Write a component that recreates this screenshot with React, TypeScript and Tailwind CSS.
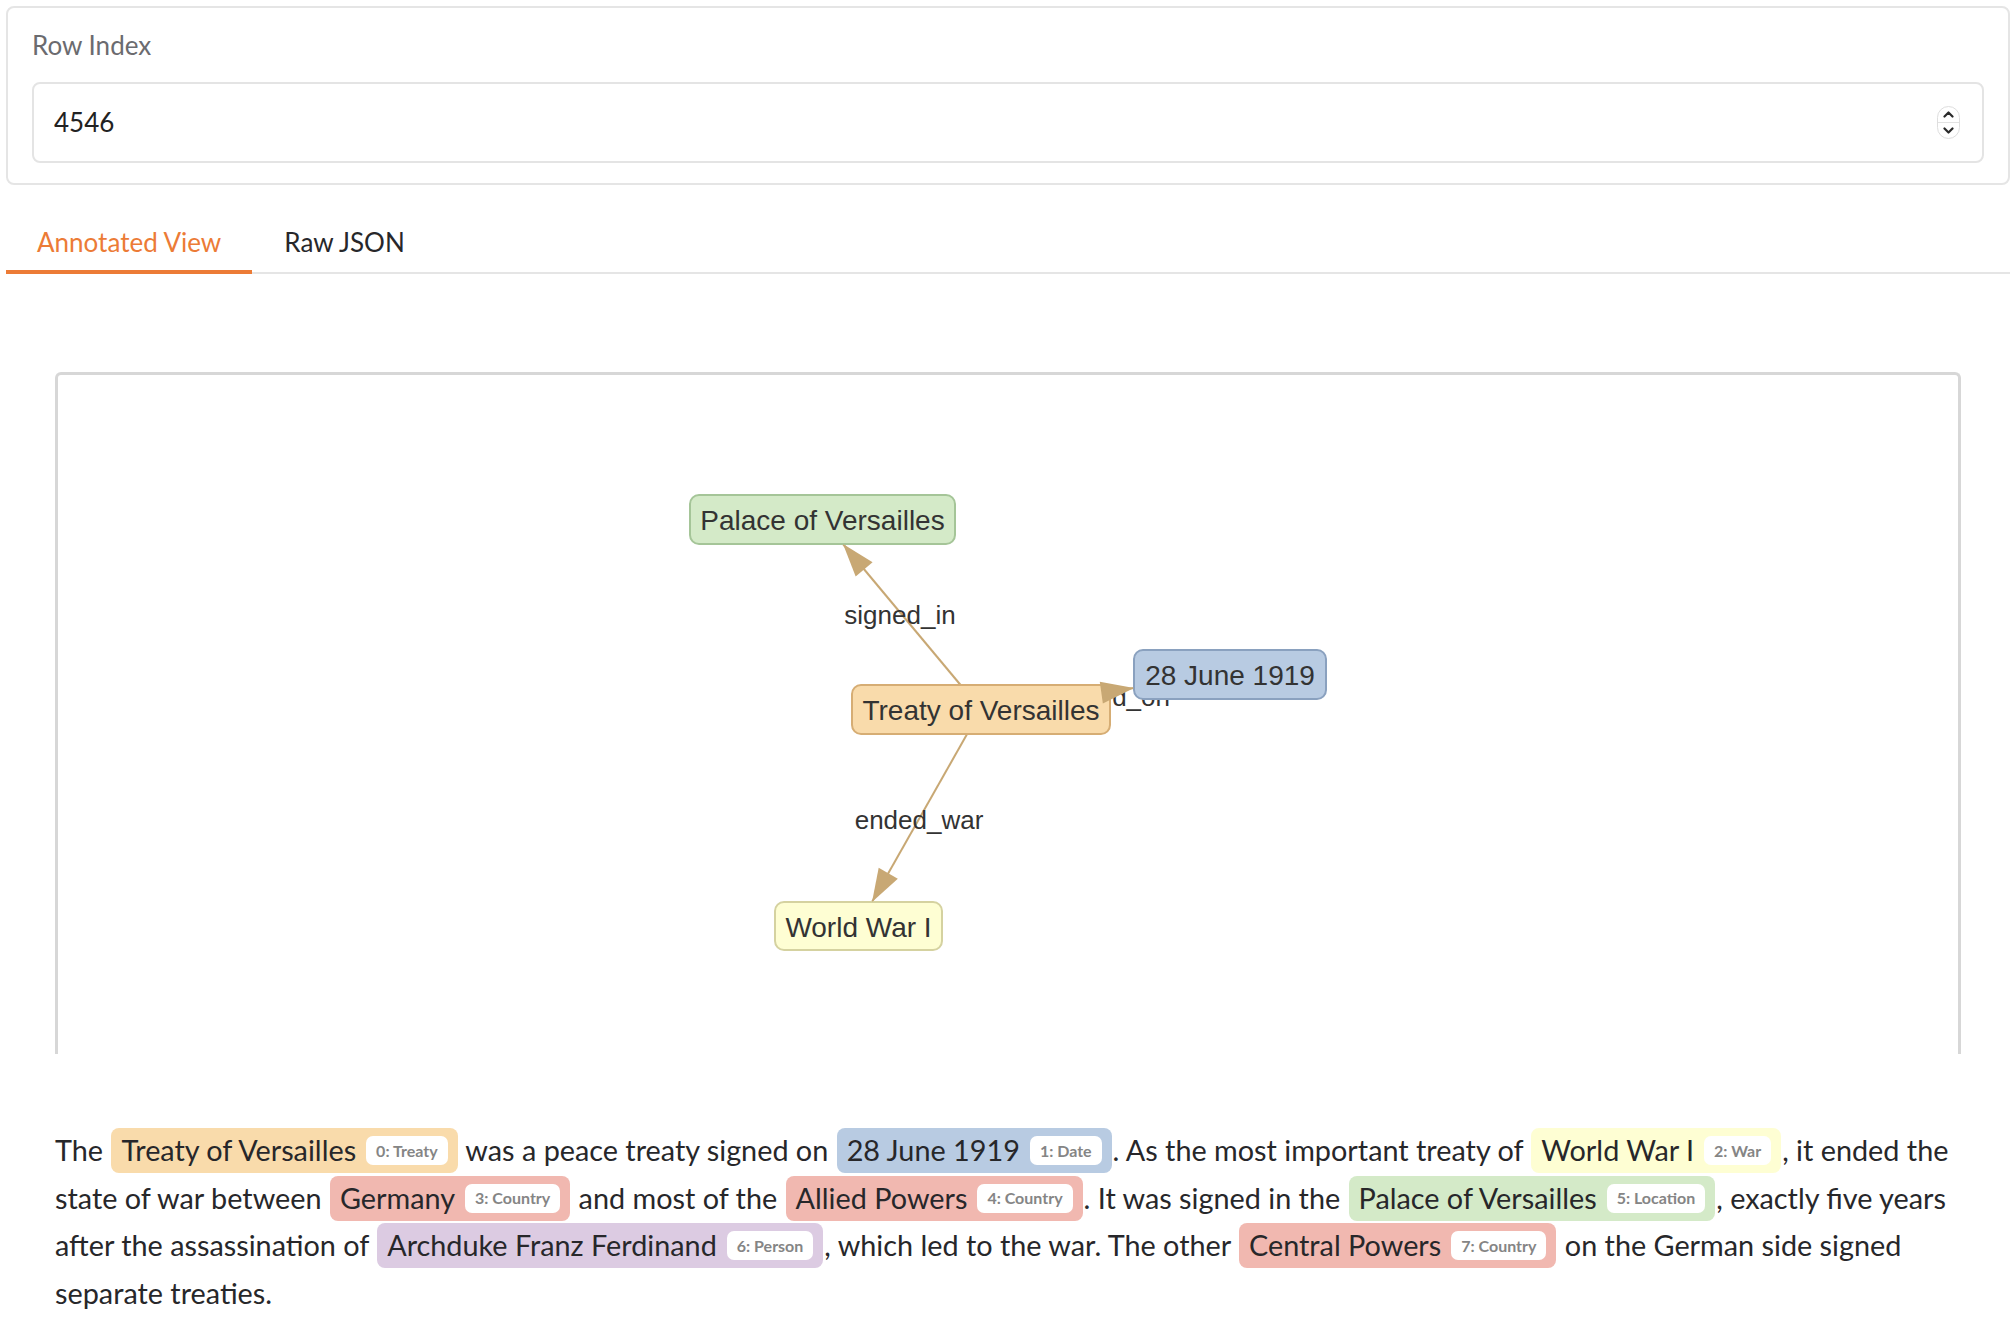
import React from 'react';

const UI_FONT = 'font-["Lato","Noto_Sans",sans-serif]';

type Node = { label: string; x: number; y: number; w: number; h: number; fill: string; stroke: string };

// graph canvas coords are relative to the inner edge of the bordered box
const NODES: Record<string, Node> = {
  palace: { label: 'Palace of Versailles', x: 632, y: 120, w: 265, h: 49, fill: '#d4eac8', stroke: '#a5c598' },
  treaty: { label: 'Treaty of Versailles', x: 794, y: 310, w: 258, h: 49, fill: '#f9dbab', stroke: '#d6ad74' },
  date: { label: '28 June 1919', x: 1076, y: 275, w: 192, h: 49, fill: '#b8cbe2', stroke: '#8aa1bf' },
  war: { label: 'World War I', x: 717, y: 527, w: 167, h: 48, fill: '#fefed3', stroke: '#d5d2a0' },
};

const EDGES = [
  { to: 'palace', tip: [785, 169], label: 'signed_in', lx: 842, ly: 240 },
  { to: 'date', tip: [1076, 313], label: 'signed_on', lx: 1052, ly: 322 },
  { to: 'war', tip: [814, 527], label: 'ended_war', lx: 861, ly: 445 },
];

const EDGE_COLOR = '#c8a874';

function center(n: Node): [number, number] {
  return [n.x + n.w / 2, n.y + n.h / 2];
}

function arrowHead(from: [number, number], tip: number[], len = 33, half = 11) {
  const dx = tip[0] - from[0];
  const dy = tip[1] - from[1];
  const d = Math.hypot(dx, dy);
  const ux = dx / d;
  const uy = dy / d;
  const bx = tip[0] - ux * len;
  const by = tip[1] - uy * len;
  return `${tip[0]},${tip[1]} ${bx - uy * half},${by + ux * half} ${bx + uy * half},${by - ux * half}`;
}

function Graph() {
  const src = center(NODES.treaty);
  return (
    <svg className="absolute inset-0 h-full w-full" style={{ fontFamily: '"Liberation Sans", Arial, sans-serif' }}>
      {/* edges + labels sit under the nodes, arrowheads on top */}
      {EDGES.map((e) => (
        <line key={e.to} x1={src[0]} y1={src[1]} x2={e.tip[0]} y2={e.tip[1]} stroke={EDGE_COLOR} strokeWidth={2} />
      ))}
      {EDGES.map((e) => (
        <text key={e.label} x={e.lx} y={e.ly} fontSize={26} fill="#333" textAnchor="middle" dominantBaseline="central">
          {e.label}
        </text>
      ))}
      {Object.entries(NODES).map(([id, n]) => (
        <g key={id}>
          <rect x={n.x} y={n.y} width={n.w} height={n.h} rx={9} fill={n.fill} stroke={n.stroke} strokeWidth={2} />
          <text
            x={n.x + n.w / 2}
            y={n.y + n.h / 2 + 1}
            fontSize={28}
            fill="#333"
            textAnchor="middle"
            dominantBaseline="central"
          >
            {n.label}
          </text>
        </g>
      ))}
      {EDGES.map((e) => (
        <polygon key={e.to + '-arrow'} points={arrowHead(src, e.tip)} fill={EDGE_COLOR} />
      ))}
    </svg>
  );
}

function Entity({ text, tag, bg }: { text: string; tag: string; bg: string }) {
  return (
    <span className={`mx-[1px] inline-flex h-[45px] items-center gap-[10px] rounded-[8px] px-[10px] ${bg}`}>
      <span>{text}</span>
      <span className="inline-flex h-[29px] items-center rounded-[7px] bg-white px-[10px] text-[16px] font-bold leading-none text-[#858585]">
        {tag}
      </span>
    </span>
  );
}

function Spinner() {
  return (
    <div className="flex h-[33px] w-[23px] flex-col overflow-hidden rounded-full border border-[#dedede] bg-white">
      <div className="flex flex-1 items-center justify-center border-b border-[#e2e2e2]">
        <svg width="11" height="7" viewBox="0 0 11 7" fill="none">
          <path d="M1.5 5.5 5.5 1.5 9.5 5.5" stroke="#2a2a2a" strokeWidth="2.2" strokeLinecap="round" strokeLinejoin="round" />
        </svg>
      </div>
      <div className="flex flex-1 items-center justify-center">
        <svg width="11" height="7" viewBox="0 0 11 7" fill="none">
          <path d="M1.5 1.5 5.5 5.5 9.5 1.5" stroke="#2a2a2a" strokeWidth="2.2" strokeLinecap="round" strokeLinejoin="round" />
        </svg>
      </div>
    </div>
  );
}

export default function App() {
  return (
    <div className={`min-h-[1324px] overflow-hidden bg-white text-[#27272a] ${UI_FONT}`}>
      {/* Row index block */}
      <div className="mx-[6px] pt-[6px]">
        <div className="h-[179px] rounded-[8px] border-2 border-[#e5e5e5] px-[24px] pt-[20px]">
          <label className="block text-[26px] leading-[34px] text-[#6b6b6f]">Row Index</label>
          <div className="mt-[20px] flex h-[81px] items-center justify-between rounded-[8px] border-2 border-[#e4e4e4] pl-[20px] pr-[22px]">
            <span className="text-[26px] text-[#222]">4546</span>
            <Spinner />
          </div>
        </div>
      </div>

      {/* Tabs */}
      <div className="mx-[6px] mt-[25px]">
        <div className="flex border-b-2 border-[#e5e5e5]">
          <button className="-mb-[2px] flex h-[64px] items-center border-b-4 border-[#ec7b36] px-[31px] pt-[4px] text-[26px] text-[#ec7b36]">
            Annotated View
          </button>
          <button className="-mb-[2px] flex h-[64px] items-center border-b-4 border-transparent px-[32px] pt-[4px] text-[26px] text-[#27272a]">
            Raw JSON
          </button>
        </div>

        <div className="px-[49px]">
          {/* Relation graph */}
          <div className="relative mt-[98px] h-[682px] rounded-t-[6px] border-x-[3px] border-t-[3px] border-[#d7d7d7]">
            <Graph />
          </div>

          {/* Annotated text */}
          <p className="-mr-[24px] mt-[73px] text-[28.8px] leading-[47.5px] text-[#27272a]">
            The <Entity text="Treaty of Versailles" tag="0: Treaty" bg="bg-[#f9dbab]" /> was a peace treaty signed on{' '}
            <Entity text="28 June 1919" tag="1: Date" bg="bg-[#b8cbe2]" />. As the most important treaty of{' '}
            <Entity text="World War I" tag="2: War" bg="bg-[#fefed3]" />, it ended the
            <br />
            state of war between <Entity text="Germany" tag="3: Country" bg="bg-[#f1b8b0]" /> and most of the{' '}
            <Entity text="Allied Powers" tag="4: Country" bg="bg-[#f1b8b0]" />. It was signed in the{' '}
            <Entity text="Palace of Versailles" tag="5: Location" bg="bg-[#d4eac8]" />, exactly five years
            <br />
            after the assassination of <Entity text="Archduke Franz Ferdinand" tag="6: Person" bg="bg-[#dccbe2]" />,
            which led to the war. The other <Entity text="Central Powers" tag="7: Country" bg="bg-[#f1b8b0]" /> on the
            German side signed
            <br />
            separate treaties.
          </p>
        </div>
      </div>
    </div>
  );
}
